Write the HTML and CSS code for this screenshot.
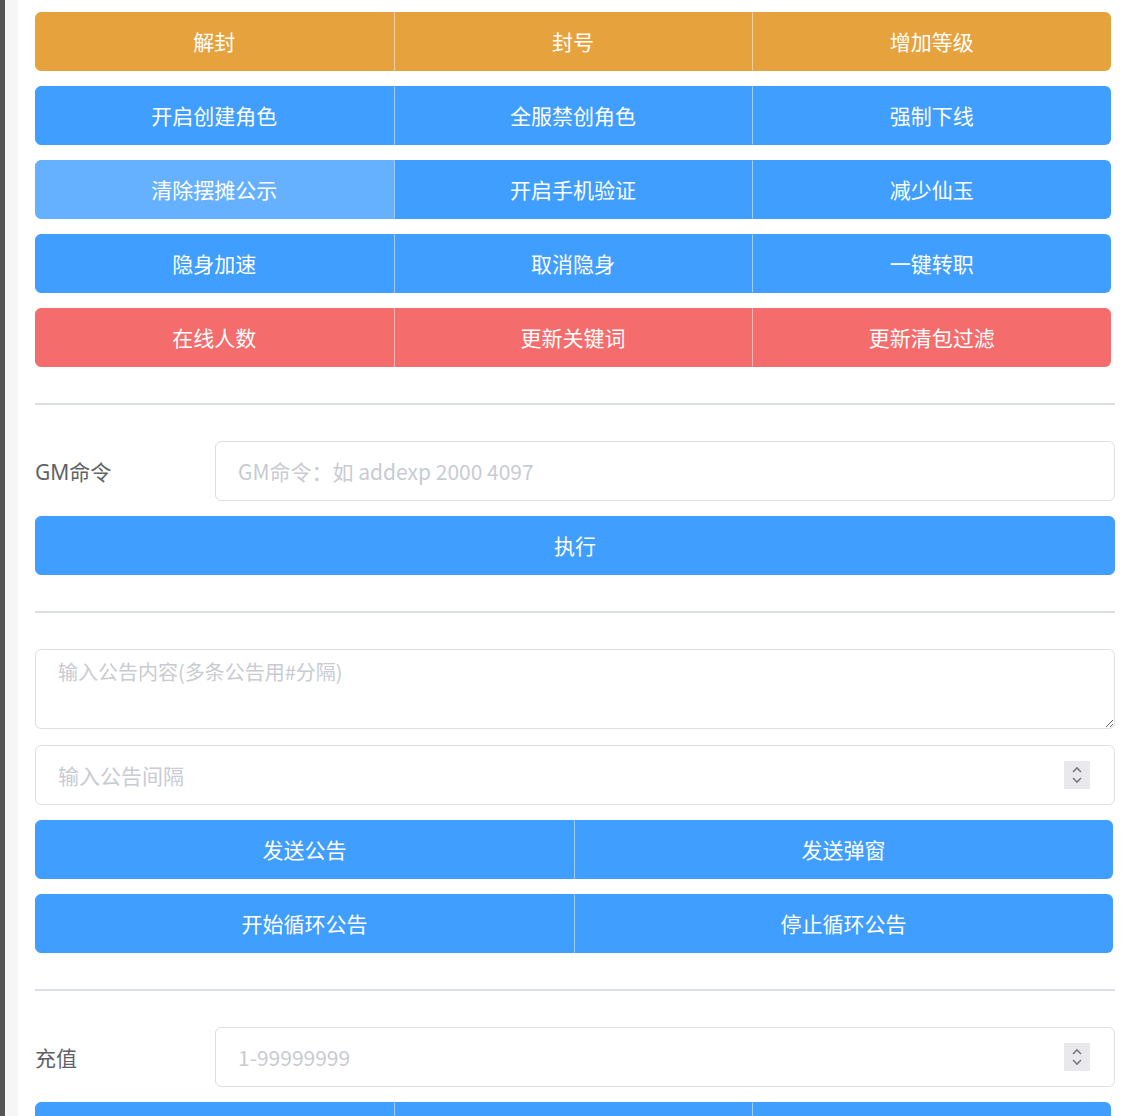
FILE: index.html
```html
<!DOCTYPE html>
<html>
<head>
    <meta charset="UTF-8">
    <title>GM工具</title>
    <link rel="stylesheet" href="styles.css">
</head>
<body>
    <div class="page">
        <div class="edge"></div>
        <div class="gutter"></div>
        <div class="main">
            <div class="btn-group">
                <button class="btn warning">解封</button>
                <button class="btn warning">封号</button>
                <button class="btn warning">增加等级</button>
            </div>
            <div class="btn-group">
                <button class="btn primary">开启创建角色</button>
                <button class="btn primary">全服禁创角色</button>
                <button class="btn primary">强制下线</button>
            </div>
            <div class="btn-group">
                <button class="btn primary hover">清除摆摊公示</button>
                <button class="btn primary">开启手机验证</button>
                <button class="btn primary">减少仙玉</button>
            </div>
            <div class="btn-group">
                <button class="btn primary">隐身加速</button>
                <button class="btn primary">取消隐身</button>
                <button class="btn primary">一键转职</button>
            </div>
            <div class="btn-group">
                <button class="btn danger">在线人数</button>
                <button class="btn danger">更新关键词</button>
                <button class="btn danger">更新清包过滤</button>
            </div>

            <div class="divider"></div>

            <div class="form-item">
                <label class="form-label">GM命令</label>
                <div class="input-wrap">
                    <input class="input" type="text" placeholder="GM命令：如 addexp 2000 4097">
                </div>
            </div>
            <button class="btn primary block">执行</button>

            <div class="divider"></div>

            <textarea class="textarea" placeholder="输入公告内容(多条公告用#分隔)"></textarea>
            <div class="input-wrap spaced">
                <input class="input" type="text" placeholder="输入公告间隔">
                <span class="spin"><svg viewBox="0 0 12 20" width="12" height="20"><path d="M2 7 L6 3 L10 7 M2 13 L6 17 L10 13" fill="none" stroke="#7a7a7a" stroke-width="1.6"/></svg></span>
            </div>
            <div class="btn-group two">
                <button class="btn primary">发送公告</button>
                <button class="btn primary">发送弹窗</button>
            </div>
            <div class="btn-group two">
                <button class="btn primary">开始循环公告</button>
                <button class="btn primary">停止循环公告</button>
            </div>

            <div class="divider"></div>

            <div class="form-item">
                <label class="form-label">充值</label>
                <div class="input-wrap">
                    <input class="input" type="text" placeholder="1-99999999">
                    <span class="spin"><svg viewBox="0 0 12 20" width="12" height="20"><path d="M2 7 L6 3 L10 7 M2 13 L6 17 L10 13" fill="none" stroke="#7a7a7a" stroke-width="1.6"/></svg></span>
                </div>
            </div>
            <div class="btn-group">
                <button class="btn primary">充值仙玉</button>
                <button class="btn primary">充值银子</button>
                <button class="btn primary">充值经验</button>
            </div>
        </div>
    </div>
</body>
</html>
```

FILE: styles.css
```css
body {
    margin: 0;
    background: #fff;
    font-family: "Noto Sans", "Noto Sans CJK SC", sans-serif;
    overflow: hidden;
}
.page {
    display: flex;
    min-height: 1116px;
}
.edge {
    width: 5px;
    background: #555;
    flex: none;
}
.gutter {
    width: 13px;
    background: #f6f6f6;
    flex: none;
}
.main {
    width: 1080px;
    padding: 12px 0 0 17px;
}
.btn-group {
    display: flex;
    width: 1076px;
    margin-bottom: 15px;
}
.btn-group.two {
    width: 1078px;
}
.btn {
    flex: 1;
    height: 59px;
    border: 1px solid transparent;
    color: #fff;
    font-family: "Noto Sans CJK SC", sans-serif;
    font-size: 21px;
    padding: 0 0 2px;
    cursor: pointer;
    border-radius: 0;
}
.btn-group .btn + .btn {
    border-left-color: rgba(255,255,255,0.5);
}
.btn-group .btn:first-child {
    border-radius: 6px 0 0 6px;
}
.btn-group .btn:last-child {
    border-radius: 0 6px 6px 0;
}
.warning {
    background: #e6a23c;
    border-color: #e6a23c;
}
.primary {
    background: #409eff;
    border-color: #409eff;
}
.primary.hover {
    background: #66b1ff;
    border-color: #66b1ff;
}
.danger {
    background: #f56c6c;
    border-color: #f56c6c;
}
.btn.block {
    display: block;
    width: 1080px;
    border-radius: 6px;
    margin-bottom: 0;
}
.divider {
    height: 2px;
    background: #dcdfe6;
    margin: 36px 0;
    width: 1080px;
}
.form-item {
    display: flex;
    align-items: center;
    margin-bottom: 15px;
}
.form-label {
    width: 180px;
    flex: none;
    font-size: 21px;
    color: #606266;
    font-family: "Noto Sans", "Noto Sans CJK SC", sans-serif;
}
.input-wrap {
    position: relative;
    flex: 1;
}
.input-wrap.spaced {
    margin: 16px 0 15px;
}
.input {
    box-sizing: border-box;
    width: 100%;
    height: 60px;
    border: 1.5px solid #dcdfe6;
    border-radius: 6px;
    padding: 0 22px;
    font-size: 21px;
    color: #606266;
    font-family: "Noto Sans CJK SC", sans-serif;
    outline: none;
}
.input::placeholder,
.textarea::placeholder {
    color: #c8cbd1;
}
.textarea {
    display: block;
    box-sizing: border-box;
    width: 1080px;
    height: 80px;
    margin-top: 1px;
    border: 1.5px solid #dcdfe6;
    border-radius: 6px;
    padding: 7px 22px;
    font-size: 20px;
    line-height: 1.5;
    font-family: "Noto Sans CJK SC", sans-serif;
    resize: vertical;
    outline: none;
}
.spin {
    position: absolute;
    right: 25px;
    top: 16px;
    width: 26px;
    height: 28px;
    background: #e9e9ed;
    display: flex;
    align-items: center;
    justify-content: center;
}
```
